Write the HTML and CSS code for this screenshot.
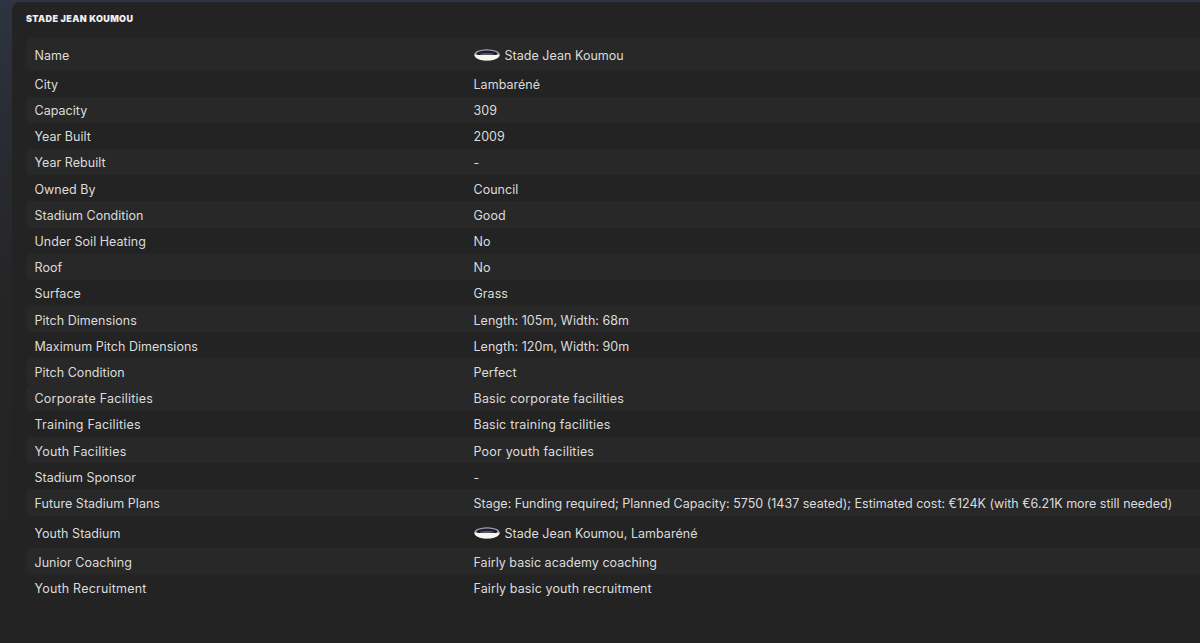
FILE: index.html
```html
<!DOCTYPE html>
<html lang="en">
<head>
<meta charset="utf-8">
<title>Stade Jean Koumou</title>
<link rel="stylesheet" href="styles.css">
</head>
<body>
<svg class="defs" width="0" height="0" aria-hidden="true">
  <symbol id="stadium" viewBox="0 0 26 12">
    <ellipse cx="13" cy="5.8" rx="12.7" ry="5.6" fill="#a4a4c4"/>
    <ellipse cx="13" cy="4.4" rx="10.6" ry="2.8" fill="#1e1e26"/>
    <path d="M0.4 5.4C0.7 9.4 6 11.4 13 11.4S25.3 9.4 25.6 5.4C24 6.4 21 6 13 6S2 6.4 0.4 5.4Z" fill="#f8f6ee"/>
    <ellipse cx="13" cy="5" rx="7.5" ry="0.8" fill="#6e6e7c"/>
  </symbol>
</svg>
<main class="panel">
  <h1 class="title">STADE JEAN KOUMOU</h1>
  <div class="table">
    <div class="row tall shade"><span class="label">Name</span><span class="value"><svg class="icon"><use href="#stadium"/></svg>Stade Jean Koumou</span></div>
    <div class="row"><span class="label">City</span><span class="value">Lambaréné</span></div>
    <div class="row shade"><span class="label">Capacity</span><span class="value">309</span></div>
    <div class="row"><span class="label">Year Built</span><span class="value">2009</span></div>
    <div class="row shade"><span class="label">Year Rebuilt</span><span class="value">-</span></div>
    <div class="row"><span class="label">Owned By</span><span class="value">Council</span></div>
    <div class="row shade"><span class="label">Stadium Condition</span><span class="value">Good</span></div>
    <div class="row"><span class="label">Under Soil Heating</span><span class="value">No</span></div>
    <div class="row shade"><span class="label">Roof</span><span class="value">No</span></div>
    <div class="row"><span class="label">Surface</span><span class="value">Grass</span></div>
    <div class="row shade"><span class="label">Pitch Dimensions</span><span class="value">Length: 105m, Width: 68m</span></div>
    <div class="row"><span class="label">Maximum Pitch Dimensions</span><span class="value">Length: 120m, Width: 90m</span></div>
    <div class="row shade"><span class="label">Pitch Condition</span><span class="value">Perfect</span></div>
    <div class="row shade wide"><span class="label">Corporate Facilities</span><span class="value">Basic corporate facilities</span></div>
    <div class="row wide"><span class="label">Training Facilities</span><span class="value">Basic training facilities</span></div>
    <div class="row shade wide"><span class="label">Youth Facilities</span><span class="value">Poor youth facilities</span></div>
    <div class="row"><span class="label">Stadium Sponsor</span><span class="value">-</span></div>
    <div class="row shade tight"><span class="label">Future Stadium Plans</span><span class="value">Stage: Funding required; Planned Capacity: 5750 (1437 seated); Estimated cost: €124K (with €6.21K more still needed)</span></div>
    <div class="row tall lower"><span class="label">Youth Stadium</span><span class="value"><svg class="icon"><use href="#stadium"/></svg>Stade Jean Koumou, Lambaréné</span></div>
    <div class="row shade"><span class="label">Junior Coaching</span><span class="value">Fairly basic academy coaching</span></div>
    <div class="row wide"><span class="label">Youth Recruitment</span><span class="value narrow">Fairly basic youth recruitment</span></div>
  </div>
</main>
</body>
</html>
```

FILE: styles.css
```css
html, body {
  margin: 0;
  height: 100%;
  overflow: hidden;
}
body {
  background: linear-gradient(180deg, #2d3441 0, #292c33 120px, #242526 300px, #232323 100%);
  font-family: Inter, "Liberation Sans", sans-serif;
  color: #dcdcdc;
  padding: 2px 0 0 12px;
  box-sizing: border-box;
}
.defs { position: absolute; }
.panel {
  background: #232323;
  border-radius: 8px 0 0 0;
  height: 641px;
  padding: 0 0 0 14px;
  box-sizing: border-box;
}
.title {
  margin: 0;
  height: 36px;
  display: flex;
  align-items: center;
  padding-bottom: 4px;
  box-sizing: border-box;
  font-size: 9px;
  font-weight: 900;
  color: #eeeeee;
  letter-spacing: 0.37px;
}
.table { display: flex; flex-direction: column; }
.row {
  display: flex;
  align-items: center;
  box-sizing: border-box;
  height: 26.2px;
  padding: 1.8px 0 0 8.5px;
  font-size: 12.5px;
  letter-spacing: 0.03px;
  white-space: nowrap;
  border-radius: 5px 0 0 5px;
}
.row.tall { height: 32.4px; }
.row.tall.lower { height: 32.7px; padding-top: 2.8px; }
.row.shade { background: #282828; }
.row.wide { letter-spacing: 0.2px; }
.row.tight .value { letter-spacing: 0; }
.value.narrow { letter-spacing: 0.1px; }
.label { width: 439px; flex: none; }
.value { display: flex; align-items: center; }
.icon { width: 26px; height: 12px; margin-right: 5px; flex: none; }
```
